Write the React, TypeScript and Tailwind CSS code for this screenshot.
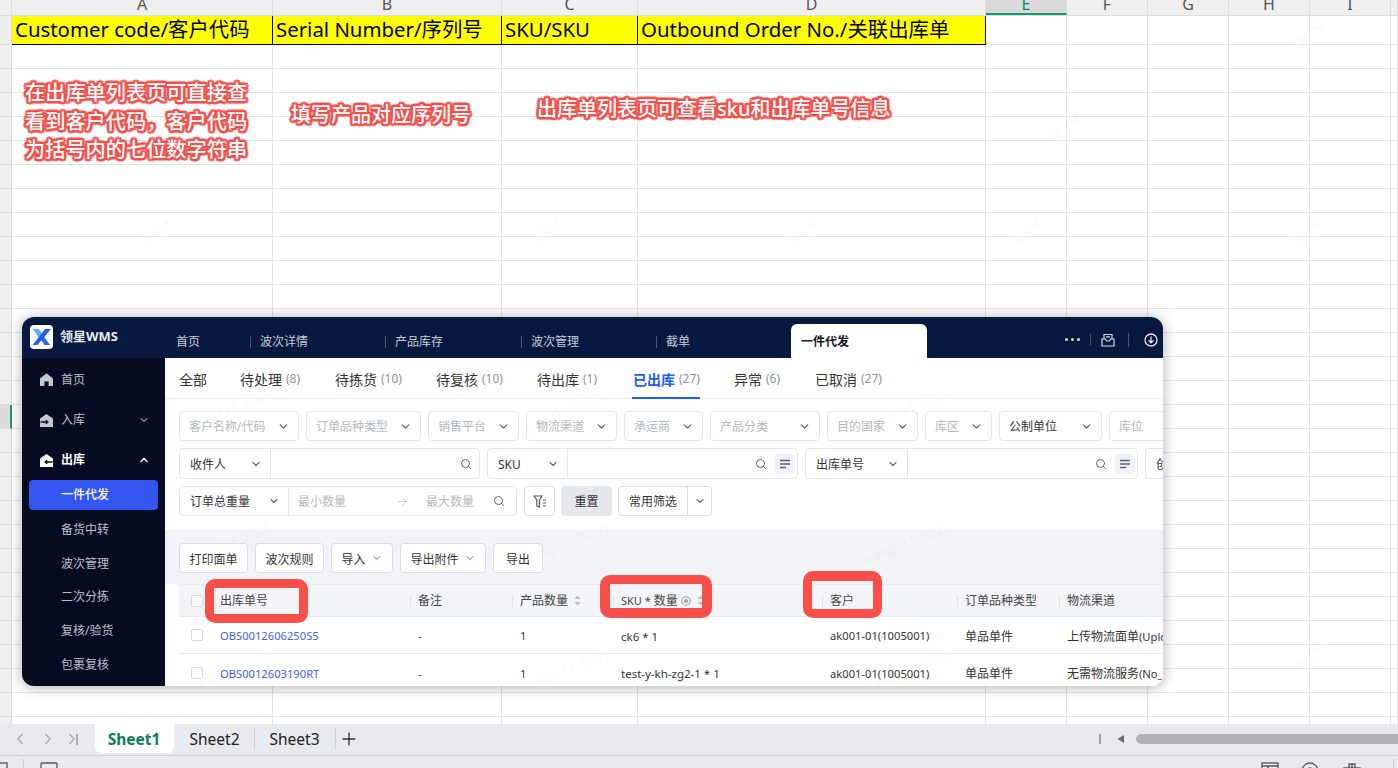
import React from "react";
import { ChevronDown, ChevronUp, Search, ArrowRight, ChevronLeft, ChevronRight, Plus } from "lucide-react";

const colCells = [
  { w: "w-[261px]", h: "A", t: "Customer code/客户代码" },
  { w: "w-[229px]", h: "B", t: "Serial Number/序列号" },
  { w: "w-[136px]", h: "C", t: "SKU/SKU" },
  { w: "w-[348px]", h: "D", t: "Outbound Order No./关联出库单" },
  { w: "w-[81px]", h: "E", t: "" },
  { w: "w-[81px]", h: "F", t: "" },
  { w: "w-[81px]", h: "G", t: "" },
  { w: "w-[81px]", h: "H", t: "" },
  { w: "w-[81px]", h: "I", t: "" },
  { w: "flex-1", h: "", t: "" },
];

function HeaderRow() {
  return (
    <div className="flex h-[16px] shrink-0 overflow-hidden bg-[#efefef] border-b border-[#dcdcdc]">
      <div className="w-[12px] border-r border-[#dcdcdc]" />
      {colCells.map((c, i) => (
        <div
          key={i}
          className={`${c.w} h-full text-center text-[16px] leading-[8px] border-r border-[#dcdcdc] ${
            c.h === "E" ? "bg-[#d9d9d9] text-[#0f8a63] border-b-2 border-b-[#129b6c]" : "text-[#555]"
          }`}
        >
          {c.h}
        </div>
      ))}
    </div>
  );
}

function TitleRow() {
  return (
    <div className="flex h-[29px] shrink-0">
      <div className="w-[12px] bg-[#efefef] border-r border-b border-[#dcdcdc]" />
      {colCells.map((c, i) =>
        i < 4 ? (
          <div
            key={i}
            className={`${c.w} bg-[#ffff00] border-r border-b border-black pl-[3px] text-[20.4px] leading-[26px] whitespace-nowrap text-black`}
          >
            {c.t}
          </div>
        ) : (
          <div key={i} className={`${c.w} border-r border-b border-[#e3e3e3]`} />
        )
      )}
    </div>
  );
}

function BodyRow({ selected }: { selected?: boolean }) {
  return (
    <div className="flex h-[24px] shrink-0">
      <div className={`w-[12px] border-r border-b border-[#dcdcdc] ${selected ? "bg-[#dcdcdc] border-r-2 border-r-[#129b6c]" : "bg-[#efefef]"}`} />
      {colCells.map((c, i) => (
        <div key={i} className={`${c.w} border-r border-b border-[#e3e3e3]`} />
      ))}
    </div>
  );
}

function Sel({ w, label, dark }: { w: string; label: string; dark?: boolean }) {
  return (
    <div className={`${w} h-full shrink-0 flex items-center justify-between pl-[9px] pr-[8px] bg-white border border-[#e3e5ea] rounded-[4px] text-[12px] ${dark ? "text-[#333]" : "text-[#b5b8be]"}`}>
      <span className="whitespace-nowrap pt-[2px]">{label}</span>
      <ChevronDown size={13} strokeWidth={2.4} className="text-[#5a6270]" />
    </div>
  );
}

function ListBtn() {
  return (
    <div className="w-[20px] h-[20px] rounded-[3px] bg-[#f0f2f5] flex items-center justify-center">
      <svg width="12" height="10" viewBox="0 0 12 10">
        <path d="M1 1.5h10M1 5h10M1 8.5h6" stroke="#596273" strokeWidth="1.6" fill="none" />
      </svg>
    </div>
  );
}

function SearchBox({ w, selW, label, list }: { w: string; selW: string; label: string; list?: boolean }) {
  return (
    <div className={`${w} h-full shrink-0 flex items-center bg-white border border-[#e3e5ea] rounded-[4px] text-[12px] text-[#333]`}>
      <div className={`${selW} h-full shrink-0 flex items-center justify-between pl-[10px] pr-[8px] border-r border-[#e3e5ea]`}>
        <span className="whitespace-nowrap pt-[2px]">{label}</span>
        <ChevronDown size={12} strokeWidth={2.2} className="text-[#5a6270]" />
      </div>
      <div className="flex-1 flex items-center justify-end gap-[8px] pr-[2px]">
        <Search size={12} strokeWidth={2} className={`text-[#5a6270] ${list ? "" : "mr-[5px]"}`} />
        {list && <ListBtn />}
      </div>
    </div>
  );
}

function Btn({ w, label, chevron }: { w: string; label: string; chevron?: boolean }) {
  return (
    <div className={`${w} h-[30px] shrink-0 flex items-center justify-center gap-[5px] bg-white border border-[#d9dce2] rounded-[4px] text-[12px] text-[#333]`}>
      <span className="pt-[3px]">{label}</span>
      {chevron && <ChevronDown size={12} strokeWidth={1.8} className="text-[#5a6270]" />}
    </div>
  );
}

function Check() {
  return <div className="w-[12px] h-[12px] ml-[12px] border border-[#d6d9de] rounded-[2px] bg-white" />;
}

function Sort() {
  return (
    <svg width="7" height="11" viewBox="0 0 7 11" className="ml-[6px]">
      <path d="M3.5 0.5L6.5 4H0.5Z M3.5 10.5L0.5 7H6.5Z" fill="#b9bdc4" />
    </svg>
  );
}

function HCell({ w, label, children }: { w: string; label: React.ReactNode; children?: React.ReactNode }) {
  return (
    <div className={`${w} shrink-0 flex items-center text-[12px] text-[#444]`}>
      <span className="w-px h-[12px] bg-[#dcdfe4] mr-[7px]" />
      <span className="whitespace-nowrap pt-[1px]">{label}</span>
      {children}
    </div>
  );
}

function DCell({ w, label, cn }: { w: string; label: React.ReactNode; cn?: string }) {
  return <div className={`${w} shrink-0 pl-[8px] pt-[3px] text-[11.2px] whitespace-nowrap overflow-hidden ${cn || "text-[#333]"}`}>{label}</div>;
}

function Row({ id, sku, channel, h }: { id: string; sku: string; channel: React.ReactNode; h: string }) {
  return (
    <div className={`flex items-center ${h} border-b border-[#e8eaee] bg-white`}>
      <div className="w-[33px] shrink-0"><Check /></div>
      <DCell w="w-[198px]" label={id} cn="text-[#4160f0]" />
      <DCell w="w-[102px]" label="-" />
      <DCell w="w-[101px]" label="1" />
      <DCell w="w-[209px]" label={sku} cn="text-[#333] !text-[11.5px]" />
      <DCell w="w-[135px]" label="ak001-01(1005001)" />
      <DCell w="w-[102px]" label="单品单件" cn="text-[#333] !text-[12px]" />
      <DCell w="w-[200px]" label={channel} />
    </div>
  );
}

function NavIcon({ kind, active }: { kind: "home" | "in" | "out"; active?: boolean }) {
  const c = active ? "#ffffff" : "#c4c7cf";
  if (kind === "home")
    return (
      <svg width="13" height="13" viewBox="0 0 13 13">
        <path fillRule="evenodd" d="M6.5 0.3L13 5.4V13H8.6V8.4H4.4V13H0V5.4Z" fill={c} />
      </svg>
    );
  return (
    <svg width="13" height="13" viewBox="0 0 13 13">
      <path d="M6.5 0L13 4.6V13H0V4.6Z" fill={c} />
      <path d={kind === "in" ? "M0.5 8H7.5M5.8 6.2L7.8 8L5.8 9.8" : "M12.5 8H5.5M7.2 6.2L5.2 8L7.2 9.8"} stroke="#050b20" strokeWidth="1.4" fill="none" />
    </svg>
  );
}

const topTabs = [
  { w: "w-[84px]", t: "首页", sep: false },
  { w: "w-[135px]", t: "波次详情", sep: true },
  { w: "w-[136px]", t: "产品库存", sep: true },
  { w: "w-[135px]", t: "波次管理", sep: true },
  { w: "w-[135px]", t: "截单", sep: true },
];

const subTabs = [
  { t: "全部", n: "", w: "w-[61px]" },
  { t: "待处理", n: "(8)", w: "w-[95px]" },
  { t: "待拣货", n: "(10)", w: "w-[101px]" },
  { t: "待复核", n: "(10)", w: "w-[101px]" },
  { t: "待出库", n: "(1)", w: "w-[96px]" },
  { t: "已出库", n: "(27)", w: "w-[101px]", on: true },
  { t: "异常", n: "(6)", w: "w-[81px]" },
  { t: "已取消", n: "(27)", w: "w-[100px]" },
];

const subNav = ["备货中转", "波次管理", "二次分拣", "复核/验货", "包裹复核"];

const windowMarks = [
  "left-[161px] top-[84px]",
  "left-[498px] top-[84px]",
  "left-[838px] top-[84px]",
  "left-[161px] top-[217px]",
  "left-[498px] top-[217px]",
  "left-[838px] top-[217px]",
  "left-[161px] top-[344px]",
  "left-[498px] top-[344px]",
  "left-[838px] top-[344px]",
];

const sheetMarks = [
  "left-[1293px] top-[26px]",
  "left-[1293px] top-[225px]",
  "left-[1293px] top-[648px]",
  "left-[529px] top-[225px]",
  "left-[789px] top-[225px]",
  "left-[1010px] top-[225px]",
  "left-[1050px] top-[120px]",
  "left-[140px] top-[225px]",
];

function WmsWindow() {
  return (
    <div className="absolute left-[22px] top-[317px] w-[1141px] h-[369px] rounded-[12px] overflow-hidden bg-white shadow-[0_1px_14px_rgba(0,0,0,0.32)] flex flex-col font-[family-name:'Noto_Sans','Noto_Sans_CJK_SC',sans-serif]">
      <div className="h-[41px] shrink-0 bg-[#07193f] flex">
        <div className="w-[144px] shrink-0 flex items-center pl-[8px] pb-[2px]">
          <svg width="23" height="24" viewBox="0 0 23 24" className="shrink-0">
            <rect width="23" height="24" rx="4" fill="#ffffff" />
            <path d="M3 4H8.5L20 20H14.5Z" fill="#2f6bf2" />
            <path d="M3 4H8.5L12.5 9.6L10 12.5Z" fill="#5db4f5" />
            <path d="M15 4H21L7.5 20H2.5Z" fill="#2160ee" />
          </svg>
          <span className="ml-[7px] text-[13px] font-bold text-[#e8eaf0] whitespace-nowrap">领星WMS</span>
        </div>
        <div className="flex h-full items-end">
          {topTabs.map((t) => (
            <div key={t.t} className={`${t.w} h-[34px] flex items-center pt-[1px] text-[12px] text-[#c6cbd6]`}>
              {t.sep ? <span className="w-px h-[12px] bg-[#4a5878] mr-[9px]" /> : <span className="w-[10px]" />}
              <span className="whitespace-nowrap">{t.t}</span>
            </div>
          ))}
          <div className="w-[136px] h-[34px] bg-white rounded-t-[6px] pl-[10px] pt-[2px] flex items-center text-[12px] font-semibold text-[#1a1a1a]">一件代发</div>
        </div>
        <div className="flex-1 flex items-center justify-end pr-[5px] pt-[4px] text-[#d7dbe3]">
          <div className="flex gap-[3px]">
            <span className="w-[3px] h-[3px] rounded-full bg-[#d7dbe3]" />
            <span className="w-[3px] h-[3px] rounded-full bg-[#d7dbe3]" />
            <span className="w-[3px] h-[3px] rounded-full bg-[#d7dbe3]" />
          </div>
          <span className="w-px h-[11px] bg-[#4a5878] ml-[10px] mr-[10px]" />
          <svg width="14" height="14" viewBox="0 0 14 14" fill="none" stroke="#d7dbe3" strokeWidth="1.2">
            <path d="M3 6V1.5H11V6" />
            <path d="M1 6H4.5L5.5 8H8.5L9.5 6H13V13H1Z" />
            <path d="M5 3.8H9" />
          </svg>
          <span className="w-px h-[14px] bg-[#4a5878] ml-[13px] mr-[15px]" />
          <svg width="14" height="14" viewBox="0 0 14 14" fill="none" stroke="#e4e7ec" strokeWidth="1.3">
            <circle cx="7" cy="7" r="6" />
            <path d="M7 3.5V9.5M4.6 7.4L7 9.8L9.4 7.4" />
          </svg>
        </div>
      </div>
      <div className="flex flex-1 min-h-0">
        <div className="w-[143px] shrink-0 bg-[#050b20] flex flex-col text-[12px] text-[#bcc0c9]">
          <div className="h-[41px] shrink-0 flex items-center pl-[18px] pt-[2px] gap-[8px]">
            <NavIcon kind="home" />
            <span>首页</span>
          </div>
          <div className="h-[40px] shrink-0 flex items-center pl-[18px] pr-[15px] pt-[2px] gap-[8px]">
            <NavIcon kind="in" />
            <span className="flex-1">入库</span>
            <ChevronDown size={12} strokeWidth={3} className="text-[#6d7280]" />
          </div>
          <div className="h-[40px] shrink-0 flex items-center pl-[18px] pr-[15px] pt-[2px] gap-[8px] text-white font-semibold">
            <NavIcon kind="out" active />
            <span className="flex-1">出库</span>
            <ChevronUp size={12} strokeWidth={3} className="text-white" />
          </div>
          <div className="h-[30px] shrink-0 mx-[7px] mt-[1px] bg-[#3355f0] rounded-[4px] flex items-center pl-[32px] text-white font-medium">一件代发</div>
          <div className="mt-[2px] flex flex-col">
            {subNav.map((s) => (
              <div key={s} className="h-[33.7px] shrink-0 flex items-center pl-[39px] pt-[2px]">{s}</div>
            ))}
          </div>
        </div>
        <div className="flex-1 min-w-0 flex flex-col bg-white overflow-hidden">
          <div className="h-[41px] shrink-0 flex items-center pl-[14px] pt-[2px] border-b border-[#eceef1] relative">
            {subTabs.map((s) => (
              <div key={s.t} className={`${s.w} shrink-0 relative h-full flex items-center whitespace-nowrap text-[14px] ${s.on ? "text-[#1a5cff] font-semibold" : "text-[#333]"}`}>
                <span>{s.t}</span>
                {s.n && <span className="ml-[4px] text-[12px] font-normal text-[#8d929b]">{s.n}</span>}
                {s.on && <span className="absolute left-[-1px] w-[68px] bottom-[-1px] h-[2px] bg-[#1a5cff]" />}
              </div>
            ))}
          </div>
          <div className="h-[131px] shrink-0 pt-[12px] pl-[14px] flex flex-col gap-[7px] overflow-hidden">
            <div className="h-[30px] flex gap-[7px]">
              <Sel w="w-[120px]" label="客户名称/代码" />
              <Sel w="w-[115px]" label="订单品种类型" />
              <Sel w="w-[91px]" label="销售平台" />
              <Sel w="w-[91px]" label="物流渠道" />
              <Sel w="w-[79px]" label="承运商" />
              <Sel w="w-[110px]" label="产品分类" />
              <Sel w="w-[91px]" label="目的国家" />
              <Sel w="w-[67px]" label="库区" />
              <Sel w="w-[103px]" label="公制单位" dark />
              <Sel w="w-[100px]" label="库位" />
            </div>
            <div className="h-[31px] flex gap-[7px]">
              <SearchBox w="w-[301px]" selW="w-[91px]" label="收件人" />
              <SearchBox w="w-[311px]" selW="w-[80px]" label="SKU" list />
              <SearchBox w="w-[333px]" selW="w-[102px]" label="出库单号" list />
              <div className="w-[100px] h-full shrink-0 border border-[#e3e5ea] rounded-[4px] pl-[10px] pt-[2px] flex items-center text-[12px] text-[#333] whitespace-nowrap">创建时间</div>
            </div>
            <div className="h-[30px] flex">
              <div className="w-[338px] h-full shrink-0 flex items-center border border-[#e3e5ea] rounded-[4px] text-[12px]">
                <div className="w-[109px] h-full shrink-0 flex items-center justify-between pl-[10px] pr-[8px] border-r border-[#e3e5ea] text-[#333]">
                  <span className="whitespace-nowrap pt-[2px]">订单总重量</span>
                  <ChevronDown size={12} strokeWidth={2.2} className="text-[#5a6270]" />
                </div>
                <span className="ml-[9px] pt-[2px] text-[#b5b8be] whitespace-nowrap">最小数量</span>
                <ArrowRight size={13} strokeWidth={1.6} className="ml-[50px] text-[#c5c8ce]" />
                <span className="ml-[17px] pt-[2px] text-[#b5b8be] whitespace-nowrap">最大数量</span>
                <Search size={12} strokeWidth={2} className="ml-[19px] text-[#5a6270]" />
              </div>
              <div className="w-[31px] h-full ml-[7px] shrink-0 flex items-center justify-center border border-[#d9dce2] rounded-[4px]">
                <svg width="14" height="13" viewBox="0 0 14 13" fill="none" stroke="#555c68" strokeWidth="1.2">
                  <path d="M1 1H9L6.4 5V12L3.8 11V5Z" />
                  <path d="M10 5H13M10 8H13M10 11H13" />
                </svg>
              </div>
              <div className="w-[51px] h-full ml-[6px] pt-[2px] shrink-0 flex items-center justify-center bg-[#e5e7ea] rounded-[4px] text-[12px] text-[#333]">重置</div>
              <div className="w-[94px] h-full ml-[6px] shrink-0 flex items-center border border-[#d9dce2] rounded-[4px] text-[12px] text-[#333]">
                <div className="w-[69px] h-full pt-[2px] shrink-0 flex items-center justify-center border-r border-[#d9dce2]">常用筛选</div>
                <div className="flex-1 flex items-center justify-center">
                  <ChevronDown size={12} strokeWidth={2.2} className="text-[#5a6270]" />
                </div>
              </div>
            </div>
          </div>
          <div className="h-[54px] shrink-0 bg-[#f2f3f7] pt-[13px] pl-[14px] flex gap-[7px]">
            <Btn w="w-[69px]" label="打印面单" />
            <Btn w="w-[69px]" label="波次规则" />
            <Btn w="w-[62px]" label="导入" chevron />
            <Btn w="w-[86px]" label="导出附件" chevron />
            <Btn w="w-[50px]" label="导出" />
          </div>
          <div className="flex-1 pl-[14px] bg-white overflow-hidden">
            <div className="w-[1100px]">
              <div className="flex items-center h-[33px] bg-[#f3f4f8] border-t border-b border-[#e8eaee]">
                <div className="w-[33px] shrink-0"><Check /></div>
                <div className="w-[198px] shrink-0 pl-[8px] pt-[1px] text-[12px] text-[#444]">出库单号</div>
                <HCell w="w-[102px]" label="备注" />
                <HCell w="w-[101px]" label="产品数量"><Sort /></HCell>
                <HCell w="w-[209px]" label={<><span className="text-[11px]">SKU * </span>数量</>}>
                  <svg width="10" height="10" viewBox="0 0 10 10" className="ml-[3px]">
                    <circle cx="5" cy="5" r="4.2" fill="none" stroke="#9a9ea6" strokeWidth="1.1" />
                    <circle cx="5" cy="5" r="2" fill="#9a9ea6" />
                  </svg>
                  <Sort />
                </HCell>
                <HCell w="w-[135px]" label="客户" />
                <HCell w="w-[102px]" label="订单品种类型" />
                <HCell w="w-[200px]" label="物流渠道" />
              </div>
              <Row h="h-[37px]" id="OBS0012606250S5" sku="ck6 * 1" channel={<><span className="text-[12px]">上传物流面单</span>(Upload Label)</>} />
              <Row h="h-[38px]" id="OBS0012603190RT" sku="test-y-kh-zg2-1 * 1" channel={<><span className="text-[12px]">无需物流服务</span>(No_Service)</>} />
            </div>
          </div>
        </div>
      </div>
      {windowMarks.map((m) => (
        <span key={m} className={`absolute ${m} -rotate-[22deg] text-[13px] text-black/[0.045] whitespace-nowrap pointer-events-none`}>wang111_1005</span>
      ))}
    </div>
  );
}

const outline =
  "text-white font-medium [text-shadow:2px_0_0_#f54f4b,-2px_0_0_#f54f4b,0_2px_0_#f54f4b,0_-2px_0_#f54f4b,2px_2px_0_#f54f4b,-2px_2px_0_#f54f4b,2px_-2px_0_#f54f4b,-2px_-2px_0_#f54f4b,3px_0_1px_#f98a87,-3px_0_1px_#f98a87,0_3px_1px_#f98a87,0_-3px_1px_#f98a87]";

export default function App() {
  return (
    <div className="relative w-[1398px] h-[768px] overflow-hidden bg-white font-[family-name:'Noto_Sans','Noto_Sans_CJK_SC',sans-serif]">
      <div className="h-[724px] overflow-hidden flex flex-col">
        <HeaderRow />
        <TitleRow />
        {Array.from({ length: 29 }).map((_, i) => (
          <BodyRow key={i} selected={i === 15} />
        ))}
      </div>

      <div className="h-[32px] bg-[#e8eaee] border-b border-[#d0d2d6] flex items-start">
        <div className="flex items-center h-[30px] text-[#a9acb2]">
          <ChevronLeft size={18} strokeWidth={1.6} className="ml-[11px]" />
          <ChevronRight size={18} strokeWidth={1.6} className="ml-[10px]" />
          <ChevronRight size={18} strokeWidth={1.6} className="ml-[6px]" />
          <span className="w-[1.5px] h-[11px] bg-[#a9acb2] -ml-[5px]" />
        </div>
        <div className="ml-[17px] w-[79px] h-[29px] pt-[2px] bg-white rounded-b-[6px] flex items-center justify-center text-[15.5px] font-bold text-[#0b7d5a]">Sheet1</div>
        <div className="w-[80px] h-[30px] pl-[2px] pt-[2px] flex items-center justify-center text-[15.5px] text-[#222]">Sheet2</div>
        <span className="w-px h-[22px] mt-[4px] bg-[#cfd1d5]" />
        <div className="w-[80px] h-[30px] pt-[2px] flex items-center justify-center text-[15.5px] text-[#222]">Sheet3</div>
        <span className="w-px h-[22px] mt-[4px] bg-[#cfd1d5]" />
        <Plus size={20} strokeWidth={1.6} className="ml-[3px] mt-[5px] text-[#333]" />
        <span className="w-[2px] h-[10px] mt-[10px] ml-[740px] bg-[#a0a2a7]" />
        <svg width="10" height="10" viewBox="0 0 10 10" className="ml-[15px] mt-[10px]">
          <path d="M1.5 5L8 1V9Z" fill="#6a6c70" />
        </svg>
        <div className="ml-[10px] mt-[10px] flex-1 h-[10px] rounded-l-[5px] bg-[#b0b1b5]" />
      </div>

      <div className="h-[12px] bg-[#e8eaee] flex overflow-hidden text-[#555]">
        <svg width="8" height="12" viewBox="0 0 8 12" className="mt-[6px]">
          <rect x="-5" y="1" width="12" height="12" fill="none" stroke="#555" strokeWidth="1.3" />
        </svg>
        <span className="w-px h-[10px] ml-[15px] mt-[3px] bg-[#cfd1d5]" />
        <svg width="18" height="12" viewBox="0 0 18 12" className="ml-[16px] mt-[6px]">
          <rect x="1" y="1" width="16" height="12" rx="1" fill="none" stroke="#555" strokeWidth="1.3" />
        </svg>
        <svg width="18" height="12" viewBox="0 0 18 12" className="ml-[1203px] mt-[6px]">
          <rect x="1" y="1" width="16" height="12" fill="none" stroke="#555" strokeWidth="1.3" />
          <path d="M1 4H17M7 4V12" stroke="#555" strokeWidth="1.3" />
        </svg>
        <svg width="18" height="12" viewBox="0 0 18 12" className="ml-[22px] mt-[6px]">
          <circle cx="9" cy="9" r="8" fill="none" stroke="#555" strokeWidth="1.3" />
          <circle cx="9" cy="8" r="2" fill="none" stroke="#555" strokeWidth="1.3" />
        </svg>
        <svg width="18" height="12" viewBox="0 0 18 12" className="ml-[24px] mt-[6px]">
          <path d="M6 8V2H12V8M1 12V6H17V12M9 2V12" fill="none" stroke="#555" strokeWidth="1.3" />
        </svg>
        <span className="w-px h-[10px] ml-[32px] mt-[3px] bg-[#cfd1d5]" />
      </div>

      {sheetMarks.map((m) => (
        <span key={m} className={`absolute ${m} -rotate-[40deg] text-[11px] text-black/[0.05] whitespace-nowrap pointer-events-none`}>王 X M</span>
      ))}

      <div className={`absolute left-[25px] top-[78px] w-[226px] text-[20.2px] leading-[28.5px] whitespace-nowrap ${outline}`}>
        <div>在出库单列表页可直接查</div>
        <div>看到客户代码，客户代码</div>
        <div>为括号内的七位数字符串</div>
      </div>
      <div className={`absolute left-[291px] top-[101px] text-[20px] leading-[28px] whitespace-nowrap ${outline}`}>填写产品对应序列号</div>
      <div className={`absolute left-[537px] top-[95px] text-[20px] leading-[28px] whitespace-nowrap ${outline}`}>出库单列表页可查看sku和出库单号信息</div>

      <WmsWindow />

      <div className="absolute left-[205px] top-[579px] w-[103px] h-[44px] border-[9px] border-[#f94f4b] rounded-[10px]" />
      <div className="absolute left-[600px] top-[575px] w-[112px] h-[43px] border-[10px] border-t-[9px] border-[#f94f4b] rounded-[10px]" />
      <div className="absolute left-[803px] top-[571px] w-[79px] h-[47px] border-[9px] border-t-[10px] border-[#f94f4b] rounded-[10px]" />
    </div>
  );
}
